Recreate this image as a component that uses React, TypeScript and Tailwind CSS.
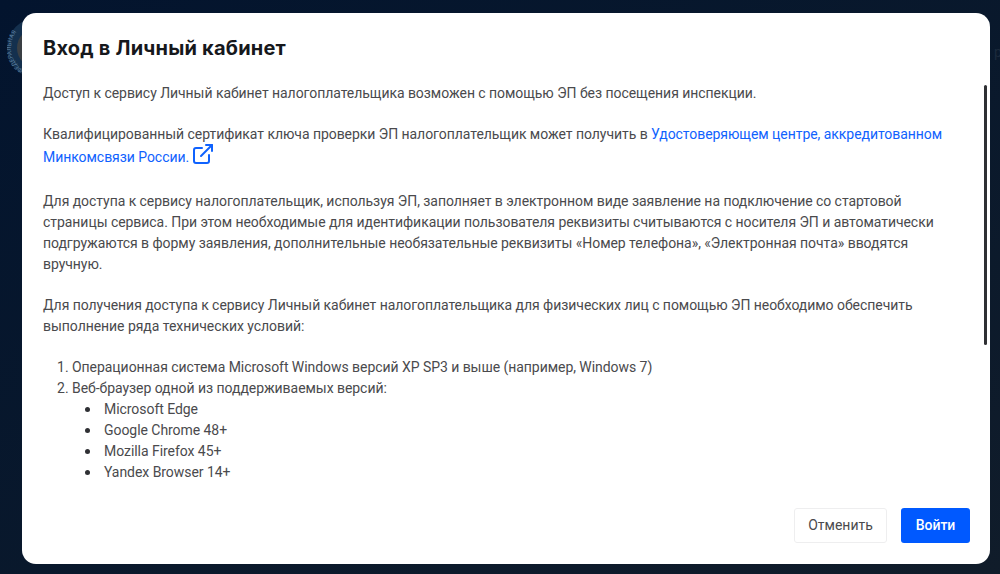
import { ExternalLink } from 'lucide-react'

const browsers = ['Microsoft Edge', 'Google Chrome 48+', 'Mozilla Firefox 45+', 'Yandex Browser 14+']

export default function App() {
  return (
    <div className="relative w-[1000px] h-[574px] overflow-hidden bg-gradient-to-br from-[#03142e] to-[#101c2a] pl-[22px] pr-[10px] pt-[13px] pb-[10px] font-['Roboto',sans-serif]">
      {/* эмблема на фоне */}
      <svg className="absolute left-[7px] top-[18px]" width="60" height="60" viewBox="0 0 60 60">
        <circle cx="30" cy="30" r="30" fill="#14304e" />
        <circle cx="30" cy="30" r="20" fill="#3a3f44" />
        <path id="emblem-ring" d="M 16 52 A 26 26 0 0 1 20 6" fill="none" />
        <text fontSize="6" fill="#5f84a6" fontFamily="Roboto, sans-serif">
          <textPath href="#emblem-ring">ФЕДЕРАЛЬНАЯ</textPath>
        </text>
      </svg>
      <span className="absolute left-[994px] top-[44px] text-[14px] leading-[16px] text-[#1c2a3c]">р</span>

      <div className="relative flex flex-col h-full bg-white rounded-[14px] overflow-hidden">
        <h1 className="pl-[21px] pt-[21px] text-[20px] leading-[28px] font-bold tracking-[0.2px] text-[#16181c] font-['Inter',sans-serif]">
          Вход в Личный кабинет
        </h1>

        <div className="flex-1 min-h-0 pl-[21px] pr-[30px] pt-[21px] text-[14px] leading-[21px] tracking-[-0.05px] text-[#4a4a4d]">
          <p>Доступ к сервису Личный кабинет налогоплательщика возможен с помощью ЭП без посещения инспекции.</p>
          <p className="mt-[20px]">
            Квалифицированный сертификат ключа проверки ЭП налогоплательщик может получить в{' '}
            <a className="text-[#0f62fe]">
              Удостоверяющем центре, аккредитованном Минкомсвязи России.
              <ExternalLink className="inline align-[-9px] ml-[2px] -mt-[3px] mb-[5px] w-[24px] h-[24px]" strokeWidth={2} />
            </a>
          </p>
          <p className="mt-[20px]">
            Для доступа к сервису налогоплательщик, используя ЭП, заполняет в электронном виде заявление на подключение со стартовой страницы сервиса. При этом необходимые для идентификации пользователя реквизиты считываются с носителя ЭП и автоматически подгружаются в форму заявления, дополнительные необязательные реквизиты «Номер телефона», «Электронная почта» вводятся вручную.
          </p>
          <p className="mt-[20px]">
            Для получения доступа к сервису Личный кабинет налогоплательщика для физических лиц с помощью ЭП необходимо обеспечить выполнение ряда технических условий:
          </p>
          <ol className="mt-[20px] pl-[29px] list-decimal">
            <li>Операционная система Microsoft Windows версий XP SP3 и выше (например, Windows 7)</li>
            <li>
              Веб-браузер одной из поддерживаемых версий:
              <ul className="pl-[32px] list-none">
                {browsers.map(b => (
                  <li key={b} className="relative before:absolute before:left-[-19px] before:top-[8px] before:w-[5px] before:h-[5px] before:rounded-full before:bg-[#2f3034]">
                    {b}
                  </li>
                ))}
              </ul>
            </li>
          </ol>
        </div>

        <div className="flex justify-end gap-[14px] pr-[20px] pb-[21px]">
          <button className="h-[35px] w-[93px] rounded-[3px] border border-[#eeeeef] bg-white text-[14px] text-[#4a4a4d]">Отменить</button>
          <button className="h-[35px] w-[69px] rounded-[3px] bg-[#0059ff] text-[14px] font-medium text-white">Войти</button>
        </div>

        {/* полоса прокрутки */}
        <div className="absolute left-[962px] top-[72px] w-[3px] h-[260px] rounded-full bg-[#2f3034]" />
      </div>
    </div>
  )
}
